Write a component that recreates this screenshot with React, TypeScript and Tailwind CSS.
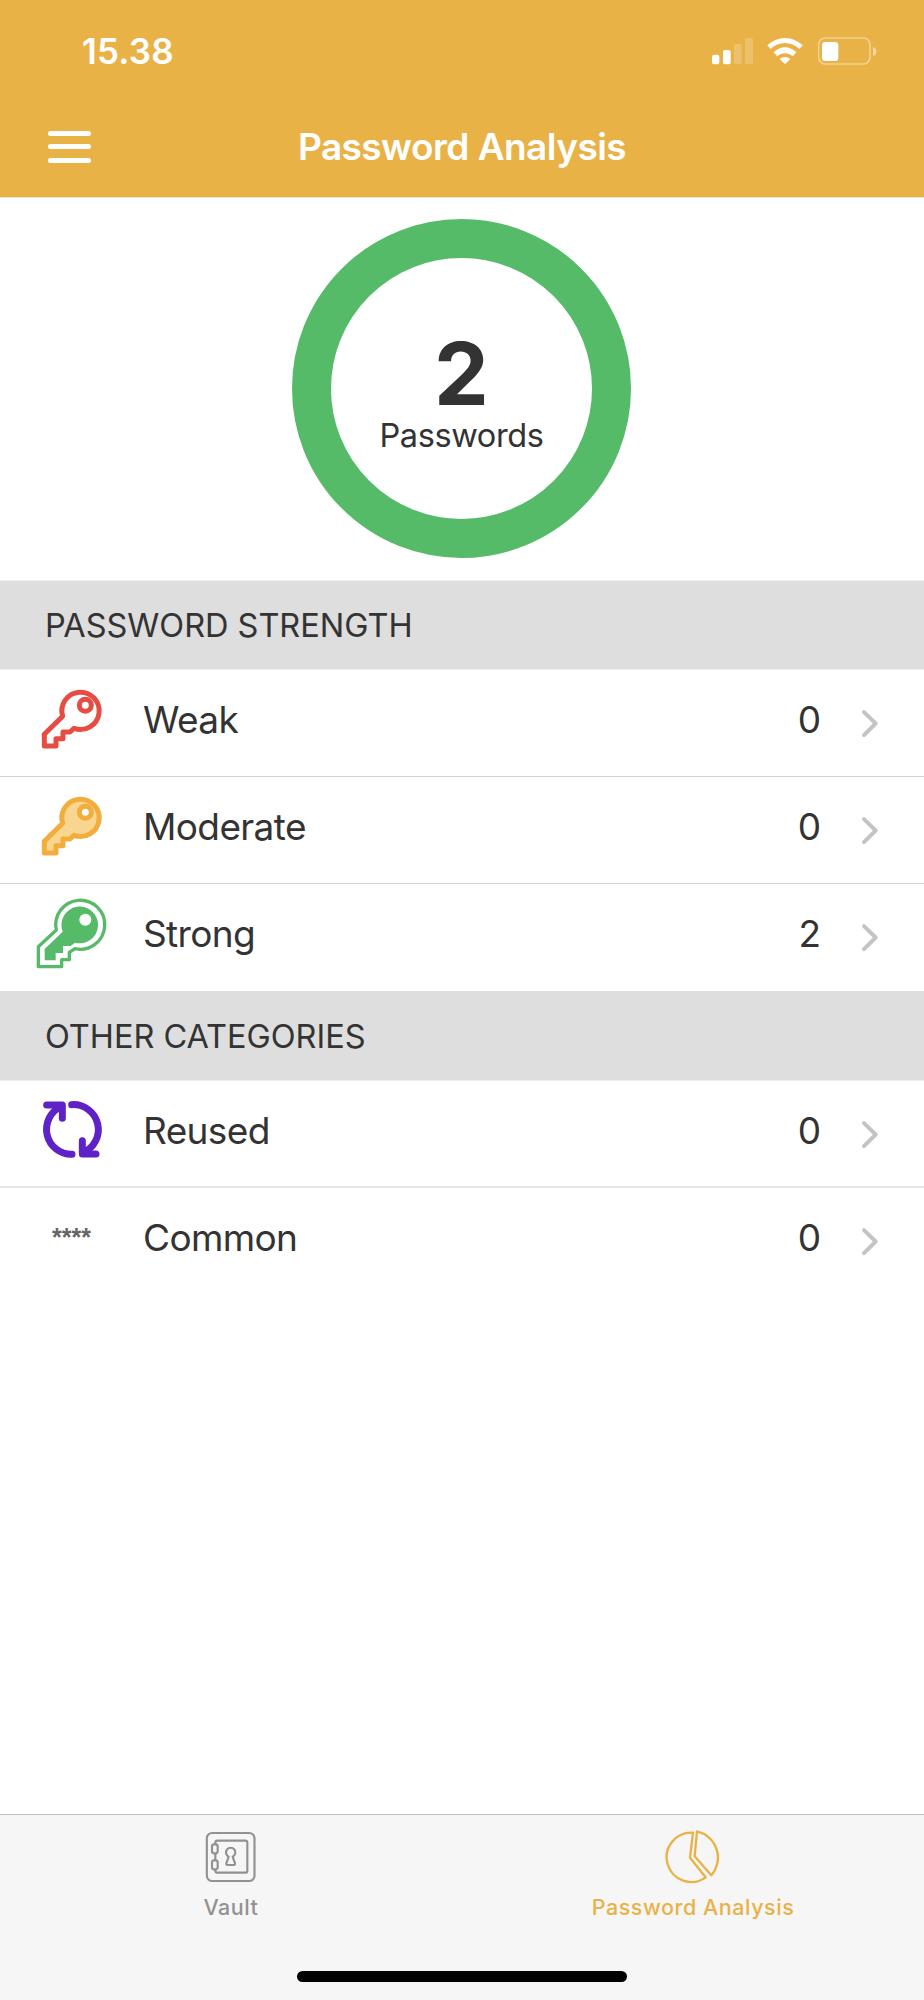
import type { ReactNode } from "react";

const KEY_PATH =
  "M188 438L133 492V527H168V505H189V485H210L222 474A56 56 0 1 0 188 438Z";

function WeakKey() {
  return (
    <svg viewBox="102 335 225 225" className="h-[75px] w-[75px]" fill="none" stroke="#e74c43" strokeWidth="15" strokeLinejoin="round">
      <path d={KEY_PATH} />
      <circle cx="256" cy="405" r="18" />
    </svg>
  );
}

function ModerateKey() {
  return (
    <svg viewBox="102 335 225 225" className="h-[75px] w-[75px]" stroke="#f2ae3c" strokeWidth="15" strokeLinejoin="round">
      <path d={KEY_PATH} fill="#f8d68f" />
      <circle cx="256" cy="405" r="18" fill="#fff" />
    </svg>
  );
}

function StrongKey() {
  return (
    <svg viewBox="102 347 225 225" className="h-[75px] w-[75px]">
      <path
        d="M169 449L115 499V559H185V538H208V516L225 505A73.500 73.500 0 1 0 169 449Z"
        fill="none"
        stroke="#55bb69"
        strokeWidth="10"
        strokeLinejoin="round"
      />
      <path d="M188 454L134 506V540H167V518H189V497H212L225 487A55 55 0 1 0 188 454Z" fill="#55bb69" />
      <circle cx="256" cy="418" r="18" fill="#fff" />
    </svg>
  );
}

function ReusedIcon() {
  return (
    <svg viewBox="103 339 225 225" className="h-[75px] w-[75px]" fill="none" stroke="#5e22c6" strokeWidth="21" strokeLinecap="round" strokeLinejoin="round">
      <path d="M216 374A75 75 0 0 1 250 518" />
      <path d="M217 523A75 75 0 0 1 184 380" />
      <path d="M141 375H188V415" />
      <path d="M289 522H248V482" />
    </svg>
  );
}

function CommonIcon() {
  return (
    <span className="w-[75px] pb-px text-center font-['Liberation_Sans',sans-serif] text-[25px] leading-[30px] font-bold text-[#666]">
      ****
    </span>
  );
}

function Chevron() {
  return (
    <svg viewBox="408 144 60 92" className="h-[31px] w-5" fill="none" stroke="#c4c4c6" strokeWidth="12" strokeLinecap="round" strokeLinejoin="round">
      <path d="M420 156L455 190L420 225" />
    </svg>
  );
}

function StatusBar() {
  return (
    <div className="flex h-[101px] items-center justify-between pr-[47px] pl-[82px]">
      <span className="pt-px text-[35px] leading-none font-semibold tracking-[0.005em]">15.38</span>
      <div className="flex gap-3.5">
        <svg viewBox="750 108 123 84" className="h-7 w-[41px]" fill="#fff">
          <rect x="750" y="161" width="22" height="29" rx="6" />
          <rect x="783" y="147" width="23" height="43" rx="6" />
          <rect x="816" y="129" width="23" height="61" rx="6" opacity="0.2" />
          <rect x="849" y="111" width="24" height="79" rx="6" opacity="0.2" />
        </svg>
        <svg viewBox="915 108 108 84" className="h-7 w-9" fill="#fff">
          <path d="M916 133A75 75 0 0 1 1022 133L1012 144A60 60 0 0 0 926 144Z" />
          <path d="M935 154A46 46 0 0 1 1003 154L992 166A33 33 0 0 0 946 166Z" />
          <path d="M953 174A24 24 0 0 1 985 174L969 190Z" />
        </svg>
        <svg viewBox="1065 108 180 84" className="h-7 w-[60px]" fill="#fff">
          <rect x="1070" y="111" width="154" height="78" rx="20" fill="none" stroke="#fff" strokeWidth="5" opacity="0.4" />
          <rect x="1080" y="123" width="49" height="57" rx="10" />
          <path d="M1233 138Q1243 142 1243 151.500T1233 165Z" opacity="0.5" />
        </svg>
      </div>
    </div>
  );
}

function NavBar() {
  return (
    <div className="grid h-24 grid-cols-[1fr_auto_1fr] items-center pb-[5px]">
      <div className="ml-12 flex w-[43px] flex-col gap-[8.500px]">
        <span className="h-[5px] rounded-full bg-white" />
        <span className="h-[5px] rounded-full bg-white" />
        <span className="h-[5px] rounded-full bg-white" />
      </div>
      <h1 className="text-[37px] leading-none font-semibold tracking-[-0.015em]">Password Analysis</h1>
    </div>
  );
}

function SectionHeader({ children, topLine }: { children: ReactNode; topLine?: boolean }) {
  return (
    <h2
      className={`flex h-[90px] items-center border-y border-b-[#eee] bg-[#dedede] pt-0.5 pl-[45px] text-[32.500px] leading-none tracking-[-0.001em] ${
        topLine ? "border-t-[#eee]" : "border-t-[#dedede]"
      }`}
    >
      {children}
    </h2>
  );
}

function Row({ icon, label, count, line }: { icon: ReactNode; label: string; count: number; line: string }) {
  return (
    <div className={`flex h-[107px] pr-11 pl-[34px] ${line}`}>
      <div className="flex h-[99px] flex-1 items-center">
        {icon}
        <span className="flex-1 pl-[34px] text-[37px] leading-none tracking-[-0.017em]">{label}</span>
        <span className="pr-[39px] text-[37px] leading-none">{count}</span>
      </div>
      <div className="flex h-[107px] items-center">
        <Chevron />
      </div>
    </div>
  );
}

function VaultIcon() {
  return (
    <svg viewBox="105 93 156 156" className="h-[52px] w-[52px]" fill="none" stroke="currentColor" strokeWidth="6.500" strokeLinejoin="round">
      <rect x="110.500" y="99" width="143" height="144" rx="16" />
      <rect x="136" y="122" width="96" height="96" rx="6" />
      <rect x="126" y="133" width="17" height="27" rx="6" fill="#f6f6f6" />
      <rect x="126" y="181" width="17" height="27" rx="6" fill="#f6f6f6" />
      <path d="M176 170A14 14 0 1 1 188 170L195 190Q196 195 191 195H173Q168 195 169 190Z" />
    </svg>
  );
}

function PieIcon() {
  return (
    <svg viewBox="316 86 168 168" className="h-14 w-14" fill="none" stroke="currentColor" strokeWidth="7" strokeLinejoin="round">
      <path d="M400 97A74 74 0 1 0 438 231L391 172Z" />
      <path d="M412 93A81 81 0 0 1 455 225L405 168Z" />
    </svg>
  );
}

function Tab({ icon, label, className }: { icon: ReactNode; label: string; className: string }) {
  return (
    <div className={`flex flex-col items-center ${className}`}>
      <div className="flex h-[83px] items-center pt-px">{icon}</div>
      <span className="text-[21.500px] leading-[18px] font-medium">{label}</span>
    </div>
  );
}

export default function App() {
  return (
    <div className="flex h-[2000px] w-[924px] flex-col bg-white font-['Inter',sans-serif] text-[#333]">
      <header className="h-[198px] border-b border-[#e8e4e0] bg-[#e9b247] text-white">
        <StatusBar />
        <NavBar />
      </header>

      <section className="flex h-[382px] justify-center pt-[21px] pr-px">
        <div className="flex h-[339px] w-[339px] flex-col items-center rounded-full border-[39px] border-[#55bb69] pt-[81px]">
          <span className="text-[87px] leading-[70px] font-bold">2</span>
          <span className="pt-[9px] text-[32.500px] leading-[36px] tracking-[-0.012em]">Passwords</span>
        </div>
      </section>

      <main className="flex-1">
        <SectionHeader topLine>PASSWORD STRENGTH</SectionHeader>
        <Row icon={<WeakKey />} label="Weak" count={0} line="border-b border-[#d2d2d2]" />
        <Row icon={<ModerateKey />} label="Moderate" count={0} line="border-b border-[#d2d2d2]" />
        <Row icon={<StrongKey />} label="Strong" count={2} line="" />
        <SectionHeader>OTHER CATEGORIES</SectionHeader>
        <Row icon={<ReusedIcon />} label="Reused" count={0} line="border-b-2 border-[#e6e6e6]" />
        <Row icon={<CommonIcon />} label="Common" count={0} line="" />
      </main>

      <footer className="flex h-[186px] flex-col items-center justify-between border-t border-[#bdbdbd] bg-[#f6f6f6] pb-[18px]">
        <nav className="grid w-full grid-cols-2">
          <Tab icon={<VaultIcon />} label="Vault" className="tracking-[0.034em] text-[#929292]" />
          <Tab icon={<PieIcon />} label="Password Analysis" className="tracking-[0.034em] text-[#e9b247]" />
        </nav>
        <div className="h-[11px] w-[330px] rounded-full bg-black" />
      </footer>
    </div>
  );
}
